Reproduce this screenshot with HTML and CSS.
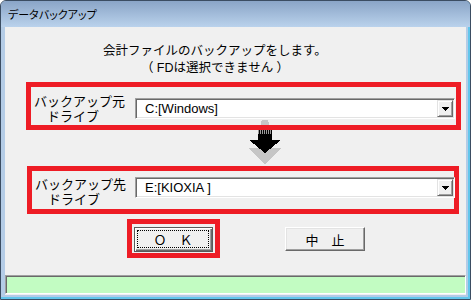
FILE: index.html
```html
<!DOCTYPE html>
<html lang="ja">
<head>
    <meta charset="UTF-8">
    <title>データバックアップ</title>
    <link rel="stylesheet" href="styles.css">
</head>
<body>
<div class="window">
    <div class="titlebar">データバックアップ</div>
    <div class="client">
        <div class="intro">
            <div>会計ファイルのバックアップをします。</div>
            <div>（ FDは選択できません ）</div>
        </div>

        <!-- コピー元 -->
        <div class="mark mark-source">
            <div class="drive-row">
                <div class="drive-label">
                    <div>バックアップ元</div>
                    <div class="indent">ドライブ</div>
                </div>
                <div class="combo">
                    <span class="combo-value">C:[Windows]</span>
                    <span class="combo-btn">
                        <svg width="7" height="4" viewBox="0 0 7 4" shape-rendering="crispEdges"><polygon points="0,0 7,0 4,4 3,4" fill="#000"/></svg>
                    </span>
                </div>
            </div>
        </div>

        <svg class="arrow" width="32" height="46" viewBox="0 0 32 46" shape-rendering="crispEdges">
            <defs>
                <pattern id="dither" width="2" height="2" patternUnits="userSpaceOnUse">
                    <rect width="2" height="2" fill="#9a9a9a"/>
                    <rect width="1" height="2" fill="#000"/>
                </pattern>
            </defs>
            <polygon points="13,0 19,0 20,3 20,10 12,10 12,3" fill="#c6c6c6"/>
            <polygon points="9,22 23,22 23,28 32,28 16,45 0,28 9,28" fill="#c6c6c6"/>
            <polygon points="9,10 23,10 23,20 32,20 16,33 0,20 9,20" fill="#000"/>
            <rect x="9" y="10" width="14" height="4" fill="url(#dither)"/>
        </svg>

        <!-- コピー先 -->
        <div class="mark mark-target">
            <div class="drive-row">
                <div class="drive-label">
                    <div>バックアップ先</div>
                    <div class="indent">ドライブ</div>
                </div>
                <div class="combo">
                    <span class="combo-value">E:[KIOXIA ]</span>
                    <span class="combo-btn">
                        <svg width="7" height="4" viewBox="0 0 7 4" shape-rendering="crispEdges"><polygon points="0,0 7,0 4,4 3,4" fill="#000"/></svg>
                    </span>
                </div>
            </div>
        </div>

        <div class="actions">
            <div class="mark mark-ok">
                <button class="btn btn-default"><span class="focus">Ｏ　Ｋ</span></button>
            </div>
            <button class="btn btn-cancel">中　止</button>
        </div>

        <div class="statusbar"></div>
    </div>
</div>
</body>
</html>
```

FILE: styles.css
```css
body {
    margin: 0;
    background-color: #fff;
    font-family: "Liberation Sans", "Noto Sans CJK JP", sans-serif;
    color: #000;
}

.window {
    width: 471px;
    height: 300px;
    box-sizing: border-box;
    border: 1px solid #3b4d62;
    border-radius: 6px 6px 0 0;
    background-color: #b4cce6;
    padding: 0 4px 4px;
    display: flex;
    flex-direction: column;
    overflow: hidden;
    box-shadow: inset -2px -2px 0 #62c6ec;
}

.titlebar {
    height: 26px;
    flex-shrink: 0;
    margin: 0 -4px;
    padding-left: 7px;
    background: linear-gradient(#8aa5c7, #bad2ec);
    display: flex;
    align-items: center;
    font-size: 11px;
    font-feature-settings: "palt";
}

.client {
    flex: 1;
    background-color: #f0f0f0;
    display: flex;
    flex-direction: column;
}

.intro {
    margin-top: 16px;
    width: 420px;
    text-align: center;
    font-size: 12.5px;
    line-height: 17px;
}

/* 赤い枠 */
.mark {
    position: relative;
    z-index: 1;
    box-sizing: border-box;
    border: 5px solid #ee1c25;
    height: 48px;
    flex-shrink: 0;
}

.mark-source {
    margin-top: 5px;
    margin-left: 21px;
    width: 435px;
    padding: 7px 0 0 3px;
}

.mark-target {
    margin-left: 22px;
    width: 432px;
    padding: 6px 0 0 3px;
}

.drive-row {
    display: flex;
    align-items: flex-start;
}

.drive-label {
    width: 101px;
    flex-shrink: 0;
    font-size: 13px;
    line-height: 15px;
    white-space: nowrap;
}

.mark-target .drive-label {
    width: 100px;
}

.indent {
    padding-left: 13px;
}

.combo {
    width: 320px;
    height: 21px;
    flex-shrink: 0;
    box-sizing: border-box;
    margin-top: 4px;
    padding: 1px;
    background-color: #fff;
    border: 1px solid;
    border-color: #a0a0a0 #fff #fff #a0a0a0;
    box-shadow: inset 1px 1px 0 #696969, inset -1px -1px 0 #e3e3e3;
    display: flex;
    align-items: center;
}

.mark-target .combo {
    margin-top: 0;
}

.combo-value {
    flex: 1;
    padding-left: 8px;
    font-size: 13px;
}

.combo-btn {
    width: 16px;
    height: 17px;
    box-sizing: border-box;
    background-color: #f0f0f0;
    border: 1px solid;
    border-color: #e3e3e3 #696969 #696969 #e3e3e3;
    box-shadow: inset 1px 1px 0 #fff, inset -1px -1px 0 #a0a0a0;
    display: flex;
    align-items: center;
    justify-content: center;
}

.arrow {
    display: block;
    flex-shrink: 0;
    margin-top: -10px;
    margin-left: 244px;
}

.actions {
    margin-top: 5px;
    display: flex;
    align-items: flex-start;
}

.mark-ok {
    margin-left: 122px;
    width: 93px;
    height: 39px;
    padding: 3px 0 0 2px;
}

.btn {
    box-sizing: border-box;
    margin: 0;
    padding: 0;
    font-family: "Liberation Sans", "Noto Sans CJK JP", sans-serif;
    font-size: 13px;
    color: #000;
    background-color: #f0f0f0;
    display: flex;
    align-items: center;
    justify-content: center;
}

.btn-default {
    width: 79px;
    height: 25px;
    border: 1px solid #5a5a5a;
    box-shadow: inset 1px 1px 0 #fff, inset -1px -1px 0 #696969, inset -2px -2px 0 #a0a0a0;
    padding: 2px 3px 3px 2px;
}

.focus {
    flex: 1;
    align-self: stretch;
    border: 1px dotted #000;
    display: flex;
    align-items: center;
    justify-content: center;
}

.btn-cancel {
    width: 80px;
    height: 24px;
    margin-left: 65px;
    margin-top: 8px;
    border: 1px solid;
    border-color: #fff #696969 #696969 #fff;
    box-shadow: inset -1px -1px 0 #a0a0a0, inset 1px 1px 0 #e3e3e3;
}

.statusbar {
    margin-top: auto;
    margin-bottom: 1px;
    height: 19px;
    flex-shrink: 0;
    box-sizing: border-box;
    background-color: #c2fcc2;
    border: 1px solid;
    border-color: #a0a0a0 #fff #fff #a0a0a0;
    box-shadow: inset 1px 1px 0 #696969;
}
```
